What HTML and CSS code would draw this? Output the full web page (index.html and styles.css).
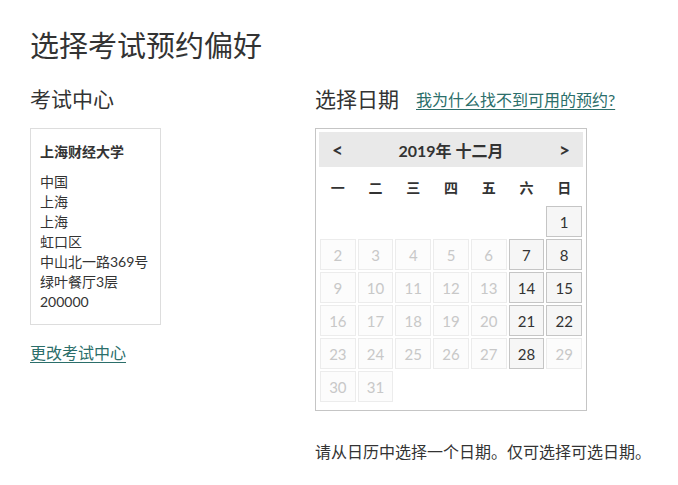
FILE: index.html
```html
<!DOCTYPE html>
<html lang="zh-CN">
<head>
<meta charset="utf-8">
<title>选择考试预约偏好</title>
<link rel="stylesheet" href="styles.css">
</head>
<body>
<div class="page">
  <h1 class="title">选择考试预约偏好</h1>
  <div class="cols">
    <section class="left">
      <h2 class="heading">考试中心</h2>
      <div class="center-box">
        <div class="center-name">上海财经大学</div>
        <div class="addr">
          <div>中国</div>
          <div>上海</div>
          <div>上海</div>
          <div>虹口区</div>
          <div>中山北一路369号</div>
          <div>绿叶餐厅3层</div>
          <div>200000</div>
        </div>
      </div>
      <a class="link change" href="#">更改考试中心</a>
    </section>
    <section class="right">
      <div class="heading-row">
        <h2 class="heading">选择日期</h2>
        <a class="link why" href="#">我为什么找不到可用的预约?</a>
      </div>
      <div class="cal">
        <div class="cal-head">
          <span class="nav">&lt;</span>
          <span class="month">2019年 十二月</span>
          <span class="nav">&gt;</span>
        </div>
        <div class="weekdays">
          <span>一</span><span>二</span><span>三</span><span>四</span><span>五</span><span>六</span><span>日</span>
        </div>
        <div class="days">
          <span class="blank"></span><span class="blank"></span><span class="blank"></span><span class="blank"></span><span class="blank"></span><span class="blank"></span>
          <span class="day on">1</span>
          <span class="day">2</span><span class="day">3</span><span class="day">4</span><span class="day">5</span><span class="day">6</span><span class="day on">7</span><span class="day on">8</span>
          <span class="day">9</span><span class="day">10</span><span class="day">11</span><span class="day">12</span><span class="day">13</span><span class="day on">14</span><span class="day on">15</span>
          <span class="day">16</span><span class="day">17</span><span class="day">18</span><span class="day">19</span><span class="day">20</span><span class="day on">21</span><span class="day on">22</span>
          <span class="day">23</span><span class="day">24</span><span class="day">25</span><span class="day">26</span><span class="day">27</span><span class="day on">28</span><span class="day">29</span>
          <span class="day">30</span><span class="day">31</span>
        </div>
      </div>
      <p class="hint">请从日历中选择一个日期。仅可选择可选日期。</p>
    </section>
  </div>
</div>
</body>
</html>
```

FILE: styles.css
```css
* { box-sizing: border-box; }
html, body { margin: 0; padding: 0; background: #fff; }
body {
  font-family: Lato, "Noto Sans CJK SC", "Noto Sans", sans-serif;
  color: #333;
}
.page { padding: 26px 0 0 30px; }
.title {
  margin: 0;
  font-size: 29px;
  font-weight: 400;
  line-height: 40px;
  color: #333;
}
.cols { display: flex; margin-top: 18px; }
.left { width: 285px; }
.right { width: 340px; }
.heading {
  margin: 0;
  font-size: 21px;
  font-weight: 400;
  line-height: 30px;
  color: #333;
}
.heading-row { display: flex; align-items: center; gap: 17px; }
.link {
  color: #2b6e6a;
  text-decoration: underline;
  text-underline-offset: 3px;
  font-size: 16px;
}
.center-box {
  margin-top: 14px;
  width: 131px;
  border: 1px solid #ddd;
  padding: 13px 9px 12px 9px;
  font-size: 14px;
  line-height: 20px;
}
.center-name { font-weight: 700; font-size: 14px; margin-bottom: 10px; }
.change { display: inline-block; margin-top: 16px; line-height: 24px; }
.cal {
  margin-top: 14px;
  width: 272px;
  border: 1px solid #c5c5c5;
  padding: 3px 3px 8px 3px;
}
.cal-head {
  height: 35px;
  background: #e9e9e9;
  display: flex;
  align-items: center;
  justify-content: space-between;
  padding: 0 13px 0 13px;
  font-weight: 700;
  font-size: 16px;
  color: #333;
}
.nav { font-size: 19px; font-weight: 700; }
.weekdays {
  display: grid;
  grid-template-columns: repeat(7, 1fr);
  gap: 2px;
  padding: 0 1px;
  height: 39px;
  align-items: center;
  text-align: center;
  font-weight: 700;
  font-size: 14px;
  color: #333;
}
.days {
  display: grid;
  grid-template-columns: repeat(7, 1fr);
  grid-auto-rows: 31px;
  gap: 2px;
  padding: 0 1px;
}
.day {
  display: flex;
  align-items: center;
  justify-content: center;
  border: 1px solid #ececec;
  background: #fcfcfc;
  color: #c8c8c8;
  font-size: 15px;
}
.day.on {
  border-color: #c5c5c5;
  background: #f6f6f6;
  color: #333;
}
.hint {
  margin: 29px 0 0 0;
  font-size: 16px;
  line-height: 24px;
  color: #333;
}
```
